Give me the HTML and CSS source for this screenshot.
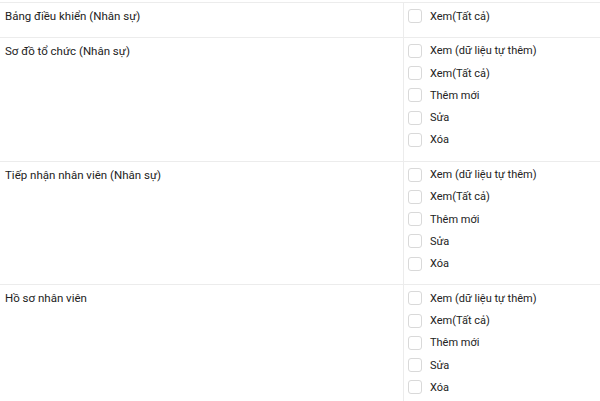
FILE: index.html
```html
<!DOCTYPE html>
<html lang="vi">
<head>
<meta charset="utf-8">
<link rel="stylesheet" href="styles.css">
</head>
<body>
<div class="table">
  <div class="row">
    <div class="label">Bảng điều khiển (Nhân sự)</div>
    <div class="opts">
      <label class="opt"><span class="box"></span>Xem(Tất cả)</label>
    </div>
  </div>
  <div class="row">
    <div class="label">Sơ đồ tổ chức (Nhân sự)</div>
    <div class="opts">
      <label class="opt"><span class="box"></span>Xem (dữ liệu tự thêm)</label>
      <label class="opt"><span class="box"></span>Xem(Tất cả)</label>
      <label class="opt"><span class="box"></span>Thêm mới</label>
      <label class="opt"><span class="box"></span>Sửa</label>
      <label class="opt"><span class="box"></span>Xóa</label>
    </div>
  </div>
  <div class="row">
    <div class="label">Tiếp nhận nhân viên (Nhân sự)</div>
    <div class="opts">
      <label class="opt"><span class="box"></span>Xem (dữ liệu tự thêm)</label>
      <label class="opt"><span class="box"></span>Xem(Tất cả)</label>
      <label class="opt"><span class="box"></span>Thêm mới</label>
      <label class="opt"><span class="box"></span>Sửa</label>
      <label class="opt"><span class="box"></span>Xóa</label>
    </div>
  </div>
  <div class="row">
    <div class="label">Hồ sơ nhân viên</div>
    <div class="opts">
      <label class="opt"><span class="box"></span>Xem (dữ liệu tự thêm)</label>
      <label class="opt"><span class="box"></span>Xem(Tất cả)</label>
      <label class="opt"><span class="box"></span>Thêm mới</label>
      <label class="opt"><span class="box"></span>Sửa</label>
      <label class="opt"><span class="box"></span>Xóa</label>
    </div>
  </div>
</div>
</body>
</html>
```
FILE: styles.css
```css
html, body {
  margin: 0;
  padding: 0;
  background: #fff;
}
body {
  font-family: Roboto, "Liberation Sans", sans-serif;
  font-size: 11px;
  color: #222;
  padding-top: 2px;
}
.table {
  display: flex;
  flex-direction: column;
}
.row {
  display: grid;
  grid-template-columns: 403px 1fr;
  border-top: 1px solid #ececec;
}
.label {
  padding: 2px 5px 0;
  font-size: 11.5px;
  line-height: 22.25px;
}
.opts {
  border-left: 1px solid #ececec;
  padding: 2px 0 9.5px 4px;
  display: flex;
  flex-direction: column;
}
.opt {
  display: flex;
  align-items: center;
  height: 22.25px;
  gap: 8px;
}
.box {
  width: 12px;
  height: 12px;
  border: 1px solid #d9d9d9;
  border-radius: 3px;
  background: #fff;
  flex: none;
}
```
